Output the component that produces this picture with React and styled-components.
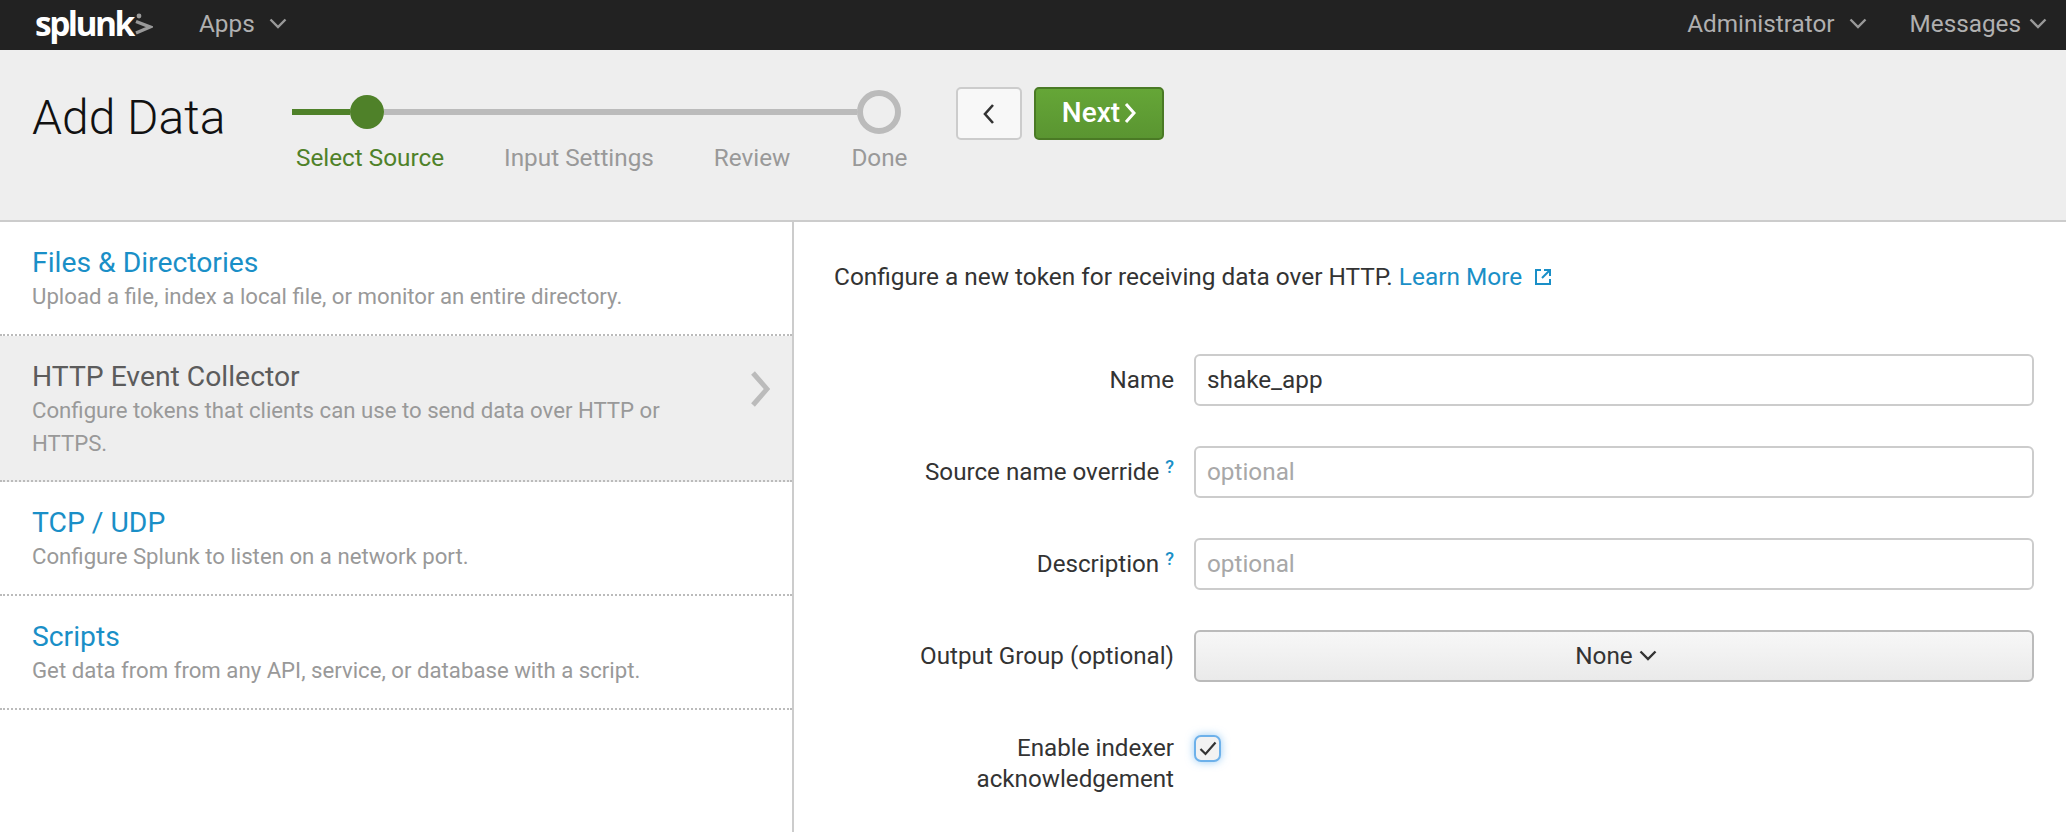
import styled, { createGlobalStyle } from 'styled-components';

const GlobalStyle = createGlobalStyle`
  html, body {
    margin: 0;
    padding: 0;
    background: #fff;
    height: 100%;
    overflow: hidden;
  }
  * { box-sizing: border-box; }
  body {
    font-family: Roboto, "Liberation Sans", sans-serif;
    font-size: 24px;
    color: #333;
  }
`;

const Page = styled.div`
  height: 832px;
  display: flex;
  flex-direction: column;
  overflow: hidden;
`;

const NavBar = styled.nav`
  height: 50px;
  flex: none;
  background: #222;
  display: flex;
  align-items: center;
  padding: 0 19px 3px 35px;
  color: #b4b4b4;
`;

const Logo = styled.div`
  display: flex;
  align-items: center;
  width: 164px;
  height: 47px;
  font-family: "Open Sans", sans-serif;
  font-weight: 700;
  font-size: 33.5px;
  letter-spacing: -2.5px;
  color: #fff;
  line-height: 47px;
  svg { margin-left: 2px; margin-top: 3px; }
`;

const NavItem = styled.div`
  display: flex;
  align-items: center;
  gap: ${p => p.$gap || 14}px;
  margin-left: ${p => p.$left || 0}px;
  font-size: 24.3px;
  color: #b0b0b0;
`;

const NavSpacer = styled.div`
  flex: 1;
`;

const Header = styled.header`
  height: 172px;
  flex: none;
  background: #eee;
  border-bottom: 2px solid #ccc;
  display: flex;
  align-items: flex-start;
  padding: 0 0 0 32px;
`;

const Title = styled.h1`
  margin: 38px 0 0;
  width: 260px;
  font-weight: 300;
  font-size: 48px;
  line-height: 60px;
  color: #111;
`;

const Stepper = styled.div`
  width: 664px;
  margin-top: 40px;
`;

const Track = styled.div`
  display: flex;
  align-items: center;
  height: 44px;
`;

const Segment = styled.div`
  height: 6px;
  width: ${p => p.$width}px;
  background: ${p => p.$done ? '#4f8129' : '#bbb'};
`;

const Dot = styled.div`
  width: 34px;
  height: 34px;
  border-radius: 50%;
  flex: none;
  background: #4f8129;
`;

const Ring = styled.div`
  width: 44px;
  height: 44px;
  border-radius: 50%;
  flex: none;
  border: 6px solid #bbb;
  background: #eee;
`;

const StepLabels = styled.div`
  display: flex;
  margin-top: 7px;
  padding-left: 4px;
`;

const StepLabel = styled.span`
  margin-left: ${p => p.$left}px;
  font-size: 24.3px;
  line-height: 34px;
  color: ${p => p.$active ? '#4f8129' : '#999'};
`;

const BackButton = styled.button`
  width: 66px;
  height: 53px;
  margin: 37px 12px 0 0;
  border: 2px solid #ccc;
  border-radius: 5px;
  background: #f8f8f8;
  display: flex;
  align-items: center;
  justify-content: center;
  padding: 0;
`;

const NextButton = styled.button`
  width: 130px;
  height: 53px;
  margin-top: 37px;
  border: 2px solid #4a7a25;
  border-radius: 5px;
  background: linear-gradient(#65a637, #5a9531);
  color: #fff;
  font-family: inherit;
  font-size: 28px;
  font-weight: 500;
  display: flex;
  align-items: center;
  justify-content: center;
  gap: 4px;
  padding: 0 0 2px;
`;

const Main = styled.div`
  flex: 1;
  display: flex;
  min-height: 0;
`;

const Sidebar = styled.aside`
  width: 794px;
  flex: none;
  border-right: 2px solid #ccc;
`;

const SourceRow = styled.div`
  position: relative;
  height: ${p => p.$height}px;
  padding: 25px 60px 0 32px;
  border-bottom: 2px dotted #bbb;
  background: ${p => p.$selected ? '#eee' : '#fff'};
`;

const SourceTitle = styled.div`
  font-size: 28.3px;
  line-height: 32px;
  color: ${p => p.$selected ? '#5c5c5c' : '#1a8fc7'};
`;

const SourceText = styled.div`
  font-size: 22.2px;
  line-height: 33px;
  color: #999;
  margin-top: 1px;
`;

const RowArrow = styled.svg`
  position: absolute;
  right: 22px;
  top: 35px;
`;

const Content = styled.section`
  flex: 1;
  padding: 40px 32px 0 40px;
`;

const Intro = styled.p`
  margin: 0 0 62px;
  font-size: 24.4px;
  line-height: 30px;
  color: #333;
  display: flex;
  align-items: center;
`;

const LearnLink = styled.a`
  color: #1a8fc7;
  margin-left: 6px;
  display: inline-flex;
  align-items: center;
  gap: 12px;
`;

const Field = styled.div`
  display: grid;
  grid-template-columns: 340px 1fr;
  column-gap: 20px;
  align-items: ${p => p.$top ? 'start' : 'center'};
  margin-bottom: ${p => p.$gap || 40}px;
`;

const Label = styled.label`
  text-align: right;
  font-size: 24.2px;
  line-height: 31px;
  color: #333;
`;

const Help = styled.sup`
  color: #1a8fc7;
  font-size: 18px;
  line-height: 0;
  margin-left: 6px;
  vertical-align: 7px;
  font-weight: 500;
`;

const TextInput = styled.input`
  width: 100%;
  height: 52px;
  border: 2px solid #ccc;
  border-radius: 6px;
  background: #fff;
  padding: 0 11px 1px;
  font-family: inherit;
  font-size: 24.3px;
  color: #333;
  &::placeholder { color: #a8a8a8; opacity: 1; }
`;

const SelectButton = styled.button`
  width: 100%;
  height: 52px;
  border: 2px solid #bbb;
  border-radius: 6px;
  background: linear-gradient(#f7f7f7, #eaeaea);
  padding: 0 0 1px 4px;
  font-family: inherit;
  font-size: 24.3px;
  color: #333;
  display: flex;
  align-items: center;
  justify-content: center;
  gap: 6px;
`;

const CheckBox = styled.span`
  width: 27px;
  height: 27px;
  margin-top: 2px;
  border: 2px solid #6db1ea;
  border-radius: 7px;
  background: #f2f2f2;
  box-shadow: 0 0 8px rgba(82, 168, 236, 0.6);
  display: flex;
  align-items: center;
  justify-content: center;
`;

const Chevron = ({ color = '#999', width = 18, height = 11, stroke = 2.4 }) => (
  <svg width={width} height={height} viewBox="0 0 18 11" fill="none">
    <path d="M1.5 1.5 9 9l7.5-7.5" stroke={color} strokeWidth={stroke} />
  </svg>
);

const sources = [
  { title: 'Files & Directories', text: 'Upload a file, index a local file, or monitor an entire directory.', height: 114 },
  { title: 'HTTP Event Collector', text: 'Configure tokens that clients can use to send data over HTTP or HTTPS.', height: 146, selected: true },
  { title: 'TCP / UDP', text: 'Configure Splunk to listen on a network port.', height: 114 },
  { title: 'Scripts', text: 'Get data from from any API, service, or database with a script.', height: 114 },
];

const App = () => (
  <Page>
    <GlobalStyle />
    <NavBar>
      <Logo>
        splunk
        <svg width="18" height="24" viewBox="0 0 18 24" fill="none">
          <circle cx="4" cy="3" r="2.4" fill="#999" />
          <path d="M1 8.5l14 5.5L1 20" stroke="#999" strokeWidth="3.4" />
        </svg>
      </Logo>
      <NavItem>
        Apps
        <Chevron />
      </NavItem>
      <NavSpacer />
      <NavItem>
        Administrator
        <Chevron />
      </NavItem>
      <NavItem $left={43} $gap={8}>
        Messages
        <Chevron />
      </NavItem>
    </NavBar>
    <Header>
      <Title>Add Data</Title>
      <Stepper>
        <Track>
          <Segment $done $width={58} />
          <Dot />
          <Segment $width={473} />
          <Ring />
        </Track>
        <StepLabels>
          <StepLabel $active $left={0}>Select Source</StepLabel>
          <StepLabel $left={60}>Input Settings</StepLabel>
          <StepLabel $left={60}>Review</StepLabel>
          <StepLabel $left={61}>Done</StepLabel>
        </StepLabels>
      </Stepper>
      <BackButton>
        <svg width="14" height="22" viewBox="0 0 14 22" fill="none">
          <path d="M11 2 3 11l8 9" stroke="#333" strokeWidth="2.6" />
        </svg>
      </BackButton>
      <NextButton>
        Next
        <svg width="12" height="22" viewBox="0 0 12 22" fill="none">
          <path d="M2 2l8 9-8 9" stroke="#fff" strokeWidth="3" />
        </svg>
      </NextButton>
    </Header>
    <Main>
      <Sidebar>
        {sources.map(s => (
          <SourceRow key={s.title} $height={s.height} $selected={s.selected}>
            <SourceTitle $selected={s.selected}>{s.title}</SourceTitle>
            <SourceText>{s.text}</SourceText>
            {s.selected && (
              <RowArrow width="20" height="36" viewBox="0 0 20 36" fill="none">
                <path d="M3 2l14 16L3 34" stroke="#bbb" strokeWidth="5" />
              </RowArrow>
            )}
          </SourceRow>
        ))}
      </Sidebar>
      <Content>
        <Intro>
          Configure a new token for receiving data over HTTP.
          <LearnLink>
            Learn More
            <svg width="18" height="18" viewBox="0 0 18 18" fill="none" stroke="#1a8fc7" strokeWidth="2">
              <path d="M7 2H2v14h14v-5" />
              <path d="M10 2h6v6M16 2 8 10" />
            </svg>
          </LearnLink>
        </Intro>
        <Field>
          <Label>Name</Label>
          <TextInput defaultValue="shake_app" />
        </Field>
        <Field>
          <Label>Source name override<Help>?</Help></Label>
          <TextInput placeholder="optional" />
        </Field>
        <Field>
          <Label>Description<Help>?</Help></Label>
          <TextInput placeholder="optional" />
        </Field>
        <Field $gap={51}>
          <Label>Output Group (optional)</Label>
          <SelectButton>
            None
            <Chevron color="#333" width={18} height={11} stroke={2.4} />
          </SelectButton>
        </Field>
        <Field $top>
          <Label>Enable indexer<br />acknowledgement</Label>
          <CheckBox>
            <svg width="18" height="15" viewBox="0 0 18 15" fill="none">
              <path d="M1.5 8 6.5 13 16.5 1.5" stroke="#333" strokeWidth="2.2" />
            </svg>
          </CheckBox>
        </Field>
      </Content>
    </Main>
  </Page>
);

export default App;
